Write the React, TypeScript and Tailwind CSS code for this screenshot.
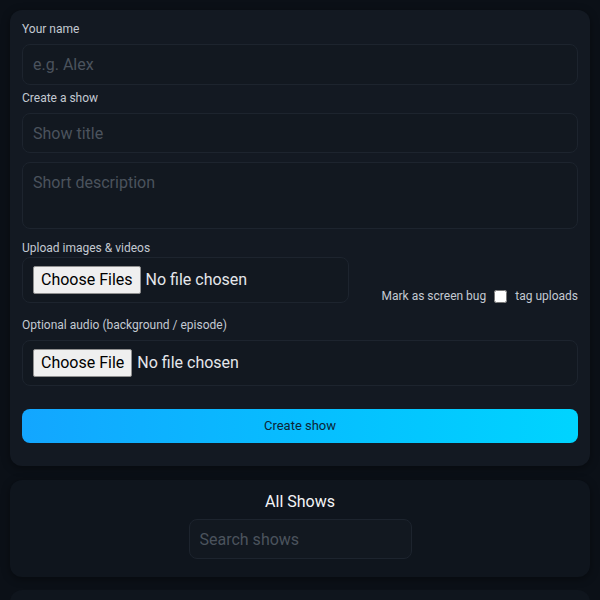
import React from 'react'

const label = 'block text-[12px] leading-[14px] text-[#c3c9d2]'
const field =
  'rounded-lg border border-[#1d242e] bg-[#121820] px-[10px] text-[16px] text-[#e5e7eb] placeholder:text-[#4b535d] outline-none'
const fileInput =
  'text-[16px] text-[#e5e7eb] file:mr-[5px] file:rounded-[2px] file:border file:border-solid file:border-[#8f8f8f] file:bg-[#efefef] file:px-[7px] file:py-[1px] file:text-[16px] file:text-black'

export default function App() {
  return (
    <div className="min-h-[600px] bg-[#0b1017] px-[10px] pt-[10px] pb-4 font-['Roboto',sans-serif]">
      <section className="rounded-xl bg-[#131922] px-3 pt-3 pb-[23px] shadow-[0_2px_8px_rgba(0,0,0,0.4)]">
        <label className={label}>Your name</label>
        <input className={`${field} mt-2 h-[41px] w-full`} placeholder="e.g. Alex" />

        <label className={`${label} mt-[6px]`}>Create a show</label>
        <input className={`${field} mt-2 h-[40px] w-full`} placeholder="Show title" />
        <textarea
          className={`${field} mt-[9px] block h-[67px] w-full resize-none pt-[8px]`}
          placeholder="Short description"
        />

        <div className="mt-3 flex items-end justify-between">
          <div className="w-[327px]">
            <label className={label}>Upload images &amp; videos</label>
            <div className="mt-[2px] flex h-[46px] items-center rounded-lg border border-[#1d242e] bg-[#121820] px-[10px]">
              <input type="file" multiple className={fileInput} />
            </div>
          </div>
          <div className="-mb-[2px] flex items-center gap-2 text-[12px] text-[#c3c9d2]">
            <span>Mark as screen bug</span>
            <input type="checkbox" className="h-[13px] w-[13px]" />
            <span>tag uploads</span>
          </div>
        </div>

        <label className={`${label} mt-[15px]`}>Optional audio (background / episode)</label>
        <div className="mt-2 flex h-[46px] items-center rounded-lg border border-[#1d242e] bg-[#121820] px-[10px]">
          <input type="file" className={fileInput} />
        </div>

        <button className="mt-[23px] h-[34px] w-full rounded-lg bg-gradient-to-r from-[#13a6ff] to-[#00d4ff] text-[13px] text-[#0c2636]">
          Create show
        </button>
      </section>

      <section className="mt-[14px] flex flex-col items-center rounded-xl bg-[#0f151d] pt-3 pb-[18px] shadow-[0_2px_8px_rgba(0,0,0,0.4)]">
        <h2 className="text-[16px] leading-[19px] text-[#f3f4f6]">All Shows</h2>
        <input className={`${field} mt-2 h-[40px] w-[223px] bg-[#0f151d]`} placeholder="Search shows" />
      </section>

      <section className="mt-[13px] h-[80px] rounded-xl bg-[#0f151d]" />
    </div>
  )
}
